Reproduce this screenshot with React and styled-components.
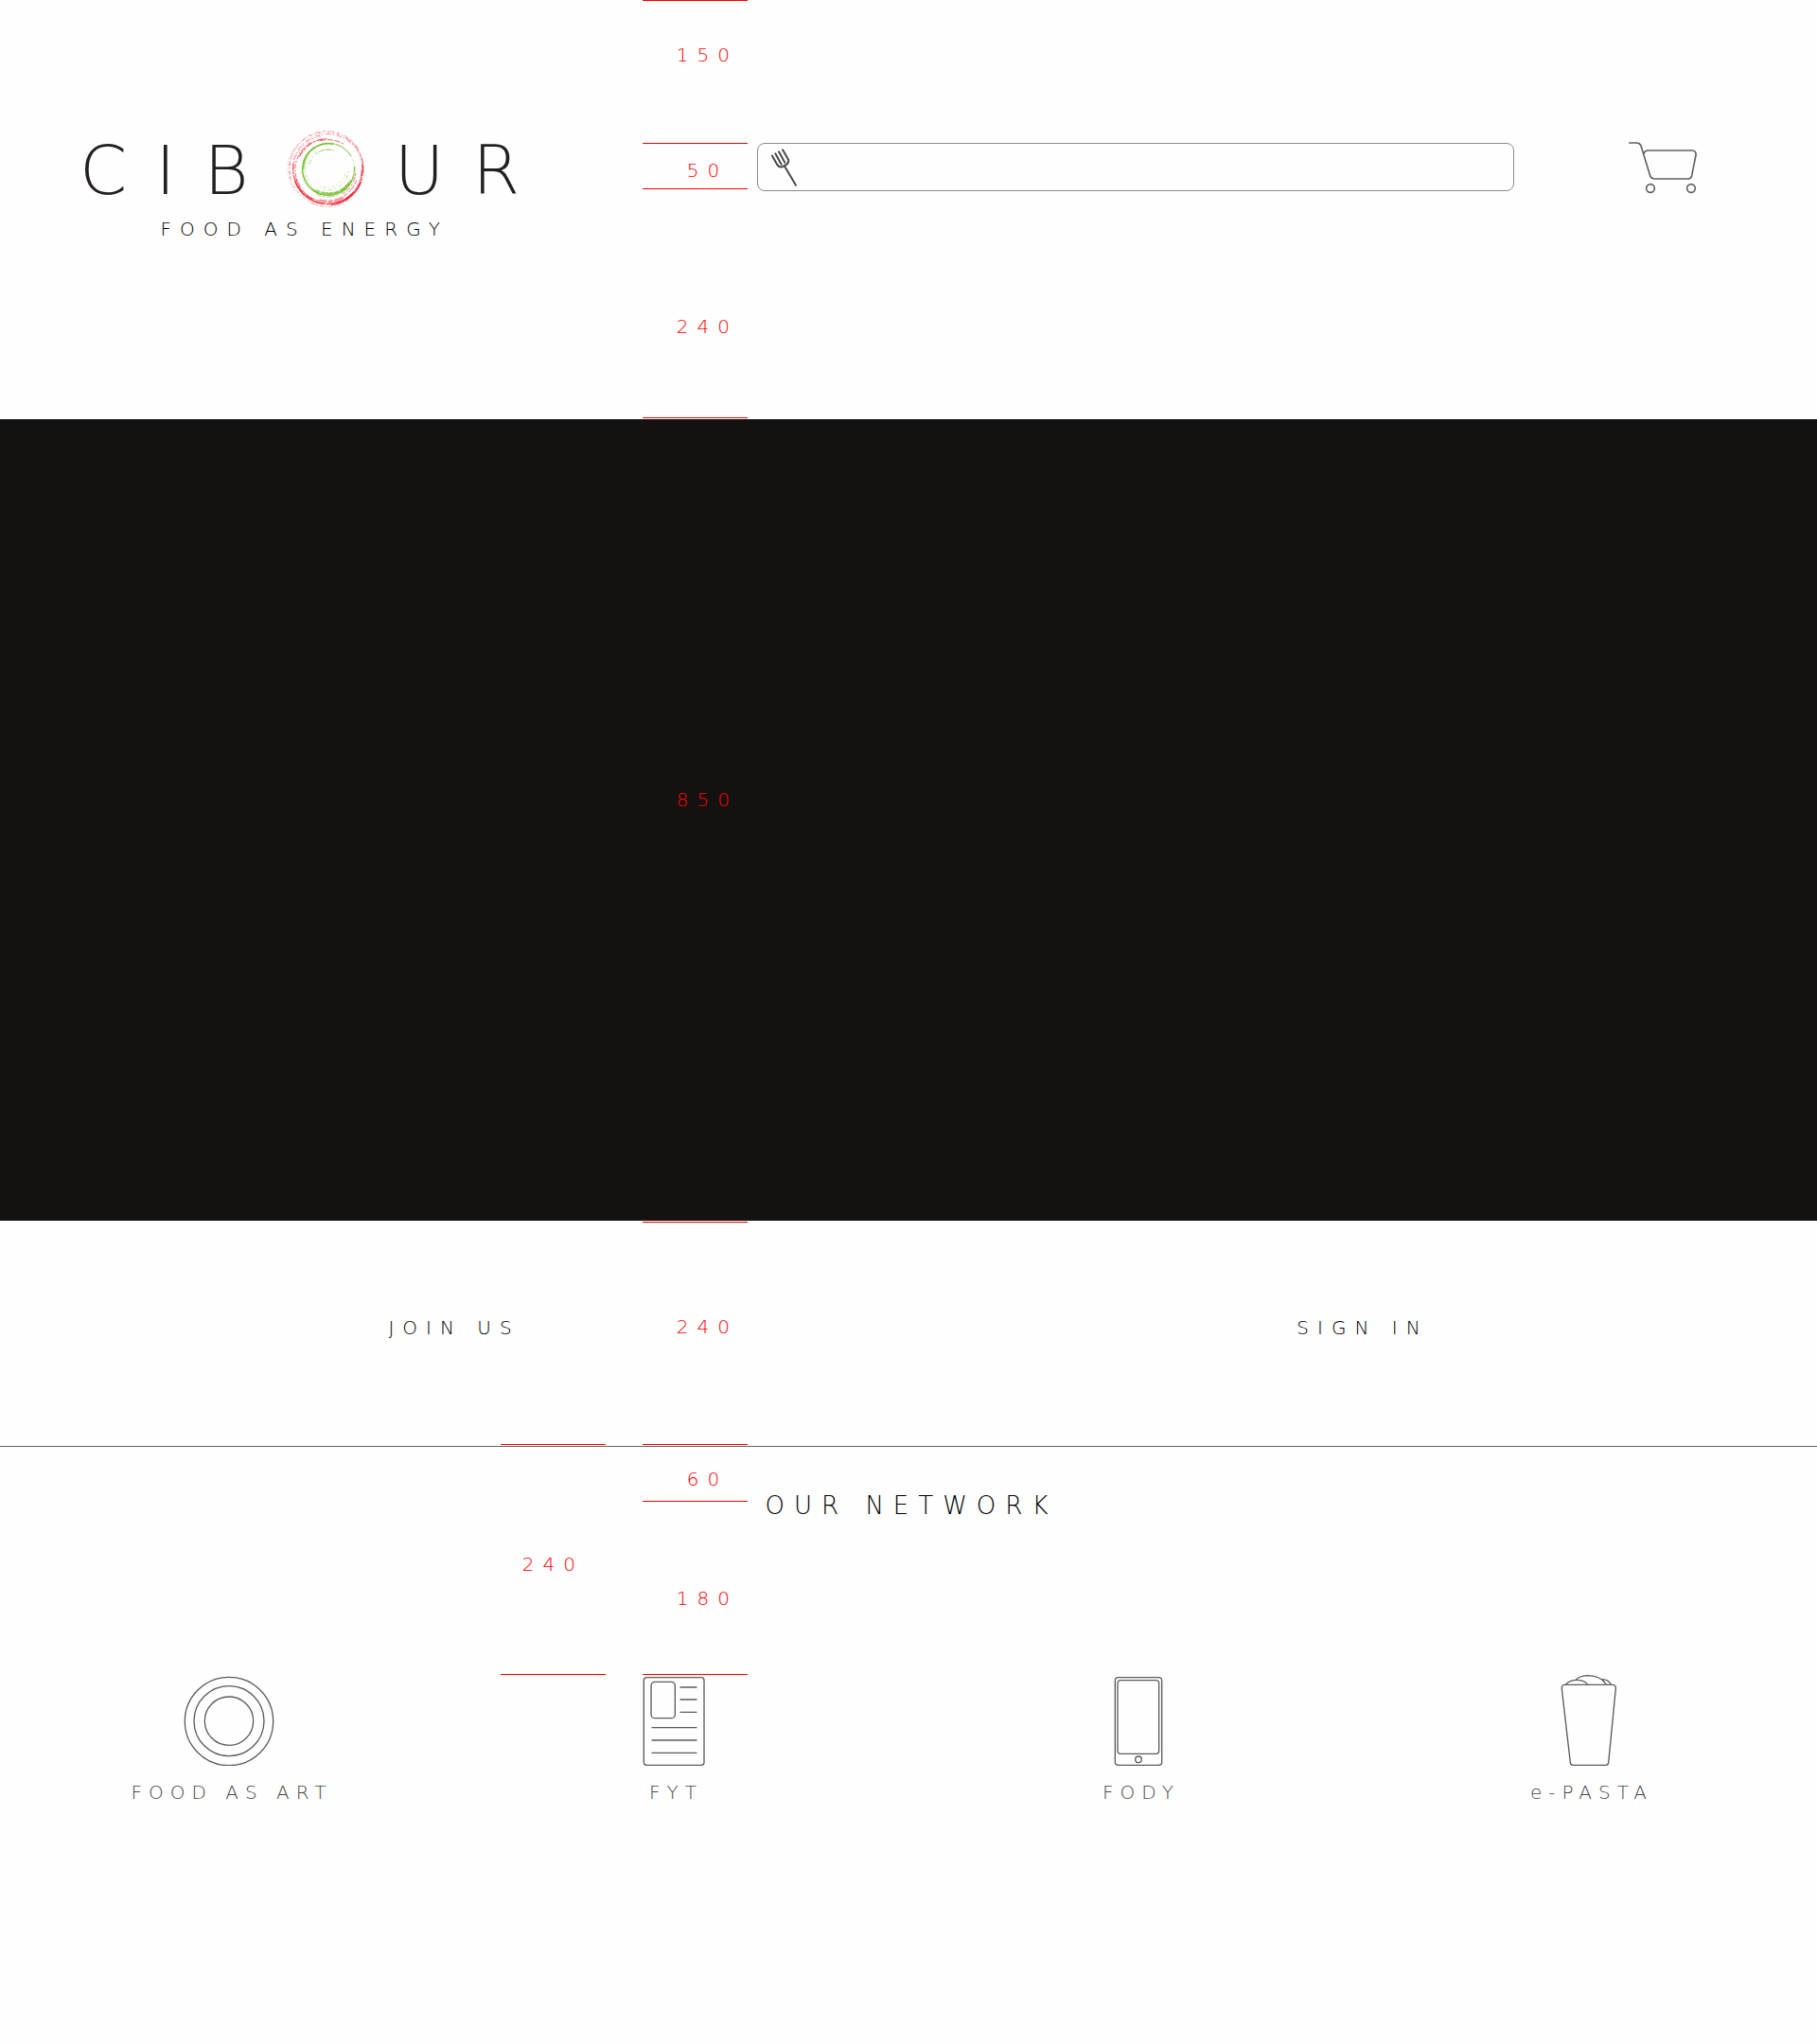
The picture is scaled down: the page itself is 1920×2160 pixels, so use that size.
import React from 'react';
import styled, { createGlobalStyle } from 'styled-components';

const GlobalStyle = createGlobalStyle`
  *, *::before, *::after { box-sizing: border-box; }
  body {
    margin: 0;
    background: #fefefe;
    color: #000;
    font-family: 'DejaVu Sans', Inter, sans-serif;
    font-weight: 200;
    font-size: 20px;
    line-height: 24px;
  }
  a { color: inherit; text-decoration: none; }
`;

const Page = styled.div`
  position: relative;
  min-height: 100vh;
`;

const Header = styled.header`
  display: grid;
  grid-template-columns: 5fr 5fr 2fr;
  align-items: start;
  min-height: 443px;
  padding-top: 137px;
`;

const Brand = styled.a`
  display: flex;
  flex-direction: column;
  align-items: center;
  justify-self: start;
  gap: 7px;
  margin-left: 84px;
`;

const Wordmark = styled.span`
  display: flex;
  align-items: center;
  color: #231f20;
  font-size: 72px;
  line-height: 72px;
  letter-spacing: 30px;
`;

const Ring = styled.svg`
  width: 82px;
  height: 82px;
  margin: 0 32px 4px 10px;
  fill: none;
`;

const Tagline = styled.span`
  padding-right: 20px;
  letter-spacing: 9px;
`;

const Search = styled.label`
  display: flex;
  align-items: center;
  gap: 12px;
  height: 51px;
  margin-top: 14px;
  padding: 0 14px;
  border: 1px solid #8c8c8c;
  border-radius: 8px;
`;

const ForkIcon = styled.svg`
  flex: none;
  width: 27px;
  height: 40px;
  fill: none;
  stroke: #484848;
  stroke-width: 6;
  stroke-linecap: round;
`;

const SearchInput = styled.input`
  flex: 1;
  min-width: 0;
  height: 40px;
  border: 0;
  outline: 0;
  background: transparent;
  font: inherit;
`;

const CartLink = styled.a`
  display: flex;
  justify-self: center;
  margin-top: 11px;
  padding-right: 6px;
`;

const CartIcon = styled.svg`
  width: 74px;
  height: 57px;
  fill: none;
  stroke: #626262;
  stroke-width: 5;
  stroke-linecap: round;
`;

const Hero = styled.section`
  height: 847px;
  background: #131210;
`;

const Members = styled.nav`
  display: grid;
  grid-template-columns: 1fr 1fr;
  align-items: center;
  justify-items: center;
  height: 239px;
  padding-bottom: 12px;
  border-bottom: 1px solid #666;
`;

const MemberLink = styled.a`
  letter-spacing: 9px;
`;

const Network = styled.section`
  display: flex;
  flex-direction: column;
  gap: 163px;
  padding: 46px 0 80px;
`;

const NetworkTitle = styled.h2`
  margin: 0;
  padding-left: 6px;
  font-size: 26px;
  line-height: 32px;
  font-weight: 200;
  letter-spacing: 10px;
  text-align: center;
`;

const NetworkList = styled.ul`
  display: grid;
  grid-template-columns: 484fr 455fr 528fr 424fr 29fr;
  margin: 0;
  padding: 0;
  list-style: none;
`;

const NetworkItem = styled.li`
  display: flex;
  justify-content: center;
`;

const NetworkLink = styled.a`
  display: flex;
  flex-direction: column;
  align-items: center;
  gap: 16px;
  color: #484848;
`;

const NetworkIcon = styled.svg`
  width: ${(p) => p.$width}px;
  height: 96px;
  fill: none;
  stroke: #5c5c5c;
  stroke-width: 4;
  stroke-linecap: round;
`;

const NetworkLabel = styled.span`
  padding-left: 6px;
  letter-spacing: 7px;
`;

const Guides = styled.aside`
  position: absolute;
  top: 0;
  left: 27.55%;
  display: flex;
  align-items: flex-end;
  gap: 39px;
  color: #f00;
  pointer-events: none;
`;

const Ruler = styled.div`
  width: 111px;
  padding: 0;
  border-bottom: 1px solid #f00;
`;

const Measure = styled.div`
  height: ${(p) => p.$height}px;
  padding-top: ${(p) => p.$lead}px;
  padding-left: ${(p) => p.$inset}px;
  border-top: 1px solid #f00;
  letter-spacing: 9px;
  text-align: center;
`;

const MAIN_RULER = [
  { value: 150, height: 151, lead: 45 },
  { value: 50, height: 48, lead: 16 },
  { value: 240, height: 242, lead: 133 },
  { value: 850, height: 850, lead: 391 },
  { value: 240, height: 235, lead: 98 },
  { value: 60, height: 60, lead: 24 },
  { value: 180, height: 183, lead: 90 },
];

// Brush strokes of the ring: [cx, cy, radius, start°, end°, width, opacity, dashes]
const RED_STROKES = [
  [166, 157, 119, 150, 330, 3, 0.4, '9 7 3 5 14 9'],
  [164, 156, 115, 165, 300, 3, 0.4, '4 6 11 8'],
  [168, 158, 111, 195, 320, 3, 0.5, '16 5 5 9'],
  [163, 157, 121, 140, 215, 2, 0.4, '3 6 7 5'],
  [166, 158, 106, 180, 262, 3, 0.45, '7 6 3 4'],
  [168, 160, 98, 205, 268, 4, 0.75, '22 3 9 4'],
  [170, 162, 97, 255, 300, 3, 0.7, '18 5'],
  [168, 160, 102, 150, 240, 3, 0.7, '13 5 5 6'],
  [166, 158, 116, 300, 365, 3, 0.7, '22 5 11 3'],
  [167, 158, 112, 320, 372, 2, 0.5, '8 4 15 5'],
  [168, 160, 112, -10, 60, 4, 0.85, '40 4 12 3'],
  [169, 161, 107, 0, 80, 3, 0.7, '26 3 11 3'],
  [170, 160, 112, 20, 85, 3, 1, ''],
  [168, 160, 109, 40, 160, 4, 0.95, '70 2 26 3'],
  [168, 160, 103, 60, 165, 3, 0.8, '34 3 16 4'],
  [166, 157, 107, 115, 190, 4, 0.8, '25 3 8 2'],
  [168, 160, 98, 20, 105, 3, 0.65, '14 4 28 5'],
  [167, 158, 119, 55, 120, 3, 0.4, '12 5 4 7'],
  [166, 156, 118, 105, 150, 3, 0.4, '5 6 10 8'],
  [170, 162, 88, 5, 60, 3, 0.6, '9 5 16 6'],
];

const GREEN_STROKES = [
  [171, 159, 82, 100, 280, 4, 0.95, ''],
  [173, 158, 81, 180, 330, 3, 0.8, '60 2 20 3'],
  [172, 160, 85, 225, 305, 2, 0.6, '18 4 8 5'],
  [172, 160, 88, 140, 240, 2, 0.35, '8 6 13 6'],
  [170, 160, 76, 120, 215, 2, 0.6, '24 5 7 4'],
  [171, 158, 82, 25, 125, 5, 0.9, ''],
  [172, 158, 77, 35, 120, 4, 0.8, '38 3 17 3'],
  [174, 158, 80, -5, 60, 5, 0.75, '18 3 34 2'],
  [173, 160, 73, 25, 105, 3, 0.55, '15 5 8 4'],
  [169, 160, 86, 45, 115, 3, 0.6, '26 5 9 4'],
  [172, 160, 64, 195, 290, 3, 0.5, '17 6 6 7'],
  [168, 160, 68, 150, 240, 2, 0.4, '5 6 10 6'],
  [168, 158, 62, 245, 285, 3, 0.5, '19 4'],
  [166, 156, 61, 15, 115, 3, 0.35, '10 7 4 6'],
  [168, 158, 67, 5, 100, 3, 0.4, '7 6 14 8'],
  [172, 158, 82, 310, 365, 2, 0.5, '10 5 17 7'],
];

const arc = (cx, cy, r, from, to) => {
  const point = (deg) => {
    const a = (deg * Math.PI) / 180;
    return `${(cx + r * Math.cos(a)).toFixed(1)} ${(cy + r * Math.sin(a)).toFixed(1)}`;
  };
  return `M${point(from)} A${r} ${r} 0 ${to - from > 180 ? 1 : 0} 1 ${point(to)}`;
};

function Strokes({ strokes, color }) {
  return (
    <g stroke={color}>
      {strokes.map(([cx, cy, r, from, to, width, opacity, dashes], i) => (
        <path
          key={i}
          d={arc(cx, cy, r, from, to)}
          strokeWidth={width}
          opacity={opacity}
          strokeDasharray={dashes || undefined}
        />
      ))}
    </g>
  );
}

const NETWORK = [
  {
    name: 'FOOD AS ART',
    width: 96,
    viewBox: '223 60 288 288',
    drawing: (
      <>
        <circle cx="367" cy="207" r="140" />
        <circle cx="367" cy="206" r="111" />
        <circle cx="367" cy="206" r="77" />
      </>
    ),
  },
  {
    name: 'FYT',
    width: 66,
    viewBox: '115 60 198 288',
    drawing: (
      <>
        <rect x="119" y="68" width="191" height="278" rx="9" />
        <rect x="142" y="82" width="76" height="115" rx="12" />
        <path d="M235 99H286M235 138H286M235 178H286M145 227H286M145 267H286M145 307H286" />
      </>
    ),
  },
  {
    name: 'FODY',
    width: 52,
    viewBox: '141 60 156 288',
    drawing: (
      <>
        <rect x="145" y="68" width="148" height="278" rx="10" />
        <rect x="153" y="77" width="131" height="233" rx="10" />
        <circle cx="219" cy="328" r="10" />
      </>
    ),
  },
  {
    name: 'e-PASTA',
    width: 60,
    viewBox: '177 60 180 288',
    drawing: (
      <>
        <path d="M190 91H343Q353 92 352 103L329 338Q328 346 320 346H217Q209 346 208 338L181 103Q180 92 190 91Z" />
        <path d="M194 90Q205 76 230 76Q252 76 264 91M226 75Q240 62 264 62Q306 63 322 91M309 74Q330 74 337 91" />
      </>
    ),
  },
];

export default function App() {
  return (
    <>
      <GlobalStyle />
      <Page>
        <Header>
          <Brand href="#home">
            <Wordmark>
              CIB
              <Ring viewBox="39 33 246 246" role="img" aria-label="O">
                <Strokes strokes={RED_STROKES} color="#ee2030" />
                <Strokes strokes={GREEN_STROKES} color="#6fba1f" />
              </Ring>
              UR
            </Wordmark>
            <Tagline>FOOD AS ENERGY</Tagline>
          </Brand>
          <Search>
            <ForkIcon viewBox="465 471 81 120" aria-hidden="true">
              <path d="M468 494L482 519Q488 532 500 529L513 522Q523 514 518 504L501 475M478 487L497 521M489 481L508 515M506 525L543 587" />
            </ForkIcon>
            <SearchInput type="search" aria-label="Search" />
          </Search>
          <CartLink href="#cart" aria-label="Cart">
            <CartIcon viewBox="480 54 222 171" aria-hidden="true">
              <path d="M485 63H508Q518 63 522 72L551 167Q555 177 566 177H670Q680 177 683 167L696 102Q698 88 684 87H546Q533 87 531 98" />
              <circle cx="552" cy="207" r="13" />
              <circle cx="681" cy="207" r="13" />
            </CartIcon>
          </CartLink>
        </Header>

        <Hero />

        <Members>
          <MemberLink href="#join">JOIN US</MemberLink>
          <MemberLink href="#signin">SIGN IN</MemberLink>
        </Members>

        <Network>
          <NetworkTitle>OUR NETWORK</NetworkTitle>
          <NetworkList>
            {NETWORK.map(({ name, width, viewBox, drawing }) => (
              <NetworkItem key={name}>
                <NetworkLink href={`#${name.toLowerCase().replace(/ /g, '-')}`}>
                  <NetworkIcon $width={width} viewBox={viewBox} aria-hidden="true">
                    {drawing}
                  </NetworkIcon>
                  <NetworkLabel>{name}</NetworkLabel>
                </NetworkLink>
              </NetworkItem>
            ))}
          </NetworkList>
        </Network>

        <Guides>
          <Ruler>
            <Measure $height={243} $lead={114} $inset={0}>240</Measure>
          </Ruler>
          <Ruler>
            {MAIN_RULER.map(({ value, height, lead }, i) => (
              <Measure key={i} $height={height} $lead={lead} $inset={26}>
                {value}
              </Measure>
            ))}
          </Ruler>
        </Guides>
      </Page>
    </>
  );
}
